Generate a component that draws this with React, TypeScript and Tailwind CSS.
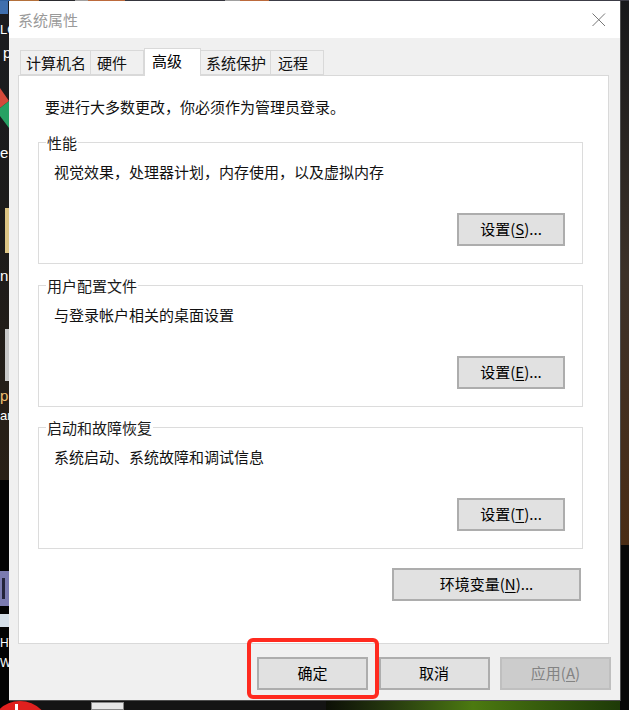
import React from 'react';

const font = { fontFamily: '"Noto Sans CJK SC", "Noto Sans", sans-serif' };

function DialogButton({ label, hotkey, suffix = '', className = '', disabled = false }: { label: string; hotkey?: string; suffix?: string; className?: string; disabled?: boolean }) {
  return (
    <button
      className={`h-[33px] border-2 pb-[2px] text-[15px] leading-none flex items-center justify-center ${disabled ? 'border-[#bfbfbf] bg-[#cccccc] text-[#838383]' : 'border-[#adadad] bg-[#e1e1e1] text-black'} ${className}`}
    >
      {label}
      {hotkey && (
        <span>
          (<span className="underline underline-offset-2">{hotkey}</span>){suffix}
        </span>
      )}
    </button>
  );
}

function Group({ title, text, hotkey }: { title: string; text: string; hotkey: string }) {
  return (
    <section className="relative ml-[19px] w-[545px] h-[122px] border border-[#dcdcdc] pt-[18px] pl-[15px] pr-[17px] pb-[17px] flex flex-col justify-between">
      <span className="absolute left-[7px] top-[-11px] bg-white px-[1px] text-[15px] leading-[22px] text-[#1a1a1a]">{title}</span>
      <p className="text-[15px] leading-[22px] text-[#111]">{text}</p>
      <div className="flex justify-end">
        <DialogButton label="设置" hotkey={hotkey} suffix="..." className="w-[108px]" />
      </div>
    </section>
  );
}

const tabs = [
  { name: '计算机名', w: 'w-[71px]', pad: 'pl-[5px]' },
  { name: '硬件', w: 'w-[53px]', pad: 'pl-[6px]' },
  { name: '高级', w: 'w-[57px]', pad: 'pl-[7px]', active: true },
  { name: '系统保护', w: 'w-[70px]', pad: 'pl-[5px]' },
  { name: '远程', w: 'w-[53px]', pad: 'pl-[7px]' },
];

// the bits of wallpaper that show along the top edge
const topStrip = [
  { w: 'w-[10px]', c: 'bg-[#2f5f9c]' },
  { w: 'w-[29px]', c: 'bg-[#b4703a]' },
  { w: 'w-[36px]', c: 'bg-[#2a2a2e]' },
  { w: 'w-[13px]', c: 'bg-[#a0a0a0]' },
  { w: 'w-[37px]', c: 'bg-[#bc6a3c]' },
  { w: 'w-[100px]', c: 'bg-[#35353d]' },
  { w: 'w-[15px]', c: 'bg-[#a0a0a0]' },
  { w: 'w-[29px]', c: 'bg-[#bc6a3c]' },
  { w: 'flex-1', c: 'bg-[#3c3c46]' },
];

export default function App() {
  return (
    <div className="relative w-[629px] h-[710px] overflow-hidden bg-[#141414]" style={font}>
      {/* desktop behind the dialog */}
      <div className="absolute left-0 top-0 w-[10px] h-[480px] bg-gradient-to-b from-[#1b1c20] via-[#1c1b1a] to-[#2a2016]" />
      <div className="absolute right-0 top-0 w-[10px] h-[545px] bg-gradient-to-b from-[#17181a] via-[#3c3128] to-[#4a2c14]" />
      <div className="absolute right-0 top-[545px] w-[10px] h-[165px] bg-[#070707]" />
      <div className="absolute left-0 top-[480px] w-[10px] h-[230px] bg-[#030303]" />

      <div className="absolute left-0 top-0 w-[8px] h-[14px] bg-[#3f6fae]" />
      <div className="absolute left-0 top-[22px] w-[9px] overflow-hidden whitespace-nowrap text-[13px] leading-[15px] font-['Liberation_Sans'] text-white">LC</div>
      <svg className="absolute left-0 top-[86px]" width="10" height="48" viewBox="0 0 10 48">
        <path d="M0 2 L9 15 L0 22 Z" fill="#d5493a" />
        <path d="M0 22 L9 15 L9 42 Z M0 22 L9 42 L0 30 Z" fill="#27a163" />
      </svg>
      <div className="absolute left-0 top-[145px] text-[15px] leading-none font-['Liberation_Sans'] text-white">e</div>
      <div className="absolute left-[3px] top-[45px] text-[15px] leading-none font-['Liberation_Sans'] text-white">p</div>
      <div className="absolute left-[5px] top-[208px] w-[4px] h-[45px] bg-[#dcc585]" />
      <div className="absolute left-0 top-[268px] text-[15px] leading-none font-['Liberation_Sans'] text-white">n</div>
      <div className="absolute left-[5px] top-[329px] w-[4px] h-[52px] bg-[#c9c9c9]" />
      <div className="absolute left-0 top-[388px] text-[15px] leading-none font-['Liberation_Sans'] text-[#f0c070]">p</div>
      <div className="absolute left-0 top-[409px] text-[13px] leading-none font-['Liberation_Sans'] text-white">ar</div>
      <div className="absolute left-0 top-[571px] w-[9px] h-[35px] bg-[#7b7bb0]" />
      <div className="absolute left-[2px] top-[578px] w-[3px] h-[21px] bg-[#23233a]" />
      <div className="absolute left-0 top-[614px] w-[9px] h-[13px] bg-[#d5dfe8]" />
      <div className="absolute left-0 top-[637px] w-[9px] overflow-hidden whitespace-nowrap text-[12px] leading-none font-['Liberation_Sans'] text-white">HT</div>
      <div className="absolute left-0 top-[657px] w-[9px] overflow-hidden text-[12px] leading-none font-['Liberation_Sans'] text-white">W</div>

      <div className="absolute left-[-10px] top-[701px] w-[60px] h-[60px] rounded-full bg-[#e0201e]" />
      <div className="absolute left-[15px] top-[704px] w-[3px] h-[6px] bg-white" />
      <div className="absolute left-[91px] top-[702px] w-[33px] h-[8px] bg-[#e6e6e6] border border-[#888]" />
      <div className="absolute left-[326px] top-[701px] w-[294px] h-[9px] bg-gradient-to-r from-[#0c0f06] via-[#4c7a10] to-[#1e3a08]" />
      <div className="absolute left-0 top-0 w-full h-[1px] flex">
        {topStrip.map((s, i) => <div key={i} className={`${s.w} ${s.c}`} />)}
      </div>

      {/* dialog */}
      <div className="relative ml-[9px] mt-[1px] w-[612px] h-[700px] border-r border-b border-[#4d4d4d] bg-[#f0f0f0]">
        <header className="h-[37px] bg-white flex items-center justify-between pl-[9px] pr-[14px]">
          <span className="text-[15px] leading-none text-[#9a9a9a]">系统属性</span>
          <svg width="14" height="14" viewBox="0 0 14 14" className="text-[#777]">
            <path d="M0.5 0.5 L13 13 M13 0.5 L0.5 13" stroke="currentColor" strokeWidth="1" fill="none" />
          </svg>
        </header>

        <div className="pl-[9px] pt-[12px]">
          <nav className="flex h-[25px] items-end pl-[2px]">
            {tabs.map(t => (
              <div
                key={t.name}
                className={`${t.w} ${t.pad} flex pt-[1px] border border-[#d9d9d9] text-[15px] leading-[22px] ${
                  t.active
                    ? 'relative z-10 h-[28px] mb-[-1px] border-b-0 bg-white text-black'
                    : 'h-[25px] border-l-0 first:border-l text-[#111]'
                }`}
              >
                {t.name}
              </div>
            ))}
          </nav>

          <div className="w-[591px] h-[569px] border border-[#d9d9d9] bg-white">
            <p className="pt-[20px] pl-[26px] text-[15px] leading-[22px] text-[#111]">要进行大多数更改，你必须作为管理员登录。</p>
            <div className="mt-[24px] flex flex-col gap-[20.5px]">
              <Group title="性能" text="视觉效果，处理器计划，内存使用，以及虚拟内存" hotkey="S" />
              <Group title="用户配置文件" text="与登录帐户相关的桌面设置" hotkey="E" />
              <Group title="启动和故障恢复" text="系统启动、系统故障和调试信息" hotkey="T" />
            </div>
            <div className="mt-[19px] flex justify-end pr-[27px]">
              <DialogButton label="环境变量" hotkey="N" suffix="..." className="w-[189px]" />
            </div>
          </div>

          <div className="mt-[13px] flex justify-end gap-[10.5px] pr-[9px]">
            <DialogButton label="确定" className="w-[111px]" />
            <DialogButton label="取消" className="w-[111px]" />
            <DialogButton label="应用" hotkey="A" className="w-[111px]" disabled />
          </div>
        </div>
      </div>

      {/* red highlight drawn over the screenshot */}
      <div className="absolute left-[247px] top-[638px] w-[132px] h-[61px] rounded-[6px] border-[4px] border-[#ff2a1f]" />
    </div>
  );
}
